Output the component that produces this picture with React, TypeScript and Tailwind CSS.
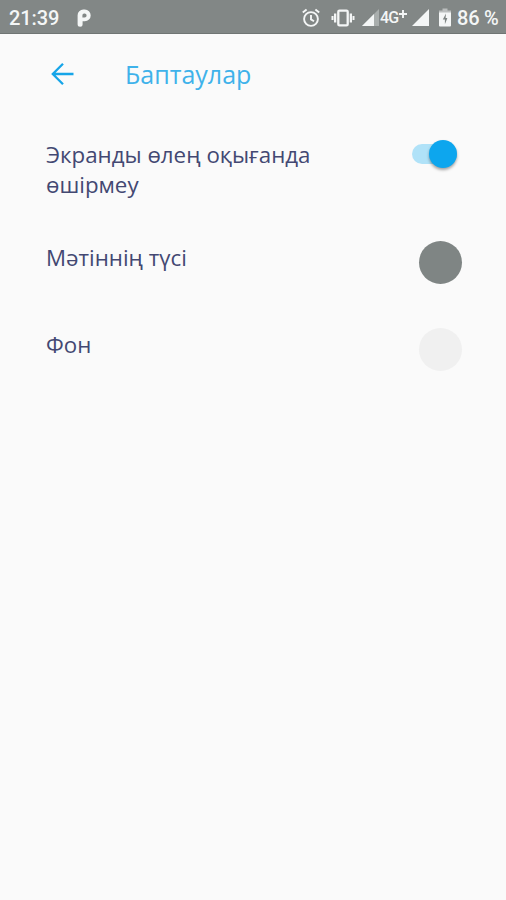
import type { ReactNode } from 'react';

function AlarmIcon() {
  return (
    <svg width="18" height="20" viewBox="0 0 18 20" fill="none" stroke="#f4f6f6" strokeWidth="1.9" className="shrink-0">
      <circle cx="9" cy="11" r="6.9" />
      <path d="M9 7v4.4l3 1.8M0.8 4.6l3.8-3.2M17.2 4.6l-3.8-3.2" />
    </svg>
  );
}

function VibrateIcon() {
  return (
    <svg width="24" height="18" viewBox="0 0 24 18" className="shrink-0">
      <rect x="7.3" y="1.6" width="9.4" height="14.8" rx="1.2" fill="none" stroke="#f4f6f6" strokeWidth="2.3" />
      <path d="M3 4.5h2.3v9H3zM0.5 7h2v4h-2zM18.7 4.5h2.3v9h-2.3zM21.5 7h2v4h-2z" fill="#f4f6f6" />
    </svg>
  );
}

function SignalIcon({ partial }: { partial?: boolean }) {
  return (
    <svg width="17" height="17" viewBox="0 0 17 17" className="shrink-0">
      <path d="M0 17L17 0v17z" fill="#f4f6f6" opacity={partial ? 0.35 : 1} />
      {partial && <path d="M0 17L12 5v12z" fill="#f4f6f6" />}
    </svg>
  );
}

function BatteryIcon() {
  return (
    <svg width="12" height="19" viewBox="0 0 12 19" className="shrink-0">
      <path d="M3.5 0.5h5v2H12v3H0v-3h3.5z" fill="#f4f6f6" opacity="0.5" />
      <path d="M0 4.5h12v13q0 1-1 1H1q-1 0-1-1z" fill="#f4f6f6" />
      <path d="M7 5.5L3.8 11.4h2.1v4.8L8.4 10H6.6z" fill="#7e8483" />
    </svg>
  );
}

function StatusBar() {
  return (
    <div className="flex h-[34px] items-center border-b border-[#707574] bg-[#828786] pt-0.5 pl-[9px] font-['Roboto',sans-serif] text-[20px] font-medium text-[#f4f6f6]">
      <span className="w-[68px] tracking-[-0.1px]">21:39</span>
      <svg width="14" height="18" viewBox="0 0 14 18" className="shrink-0">
        <path fillRule="evenodd" d="M0.6 6.2A5.7 5.7 0 0 1 6.3 0.5H7.8a5.9 5.9 0 0 1 0 11.8H5.6V15.2A2.5 2.5 0 0 1 0.6 15.2zM5.4 6.4v2h2.2a2 2 0 0 0 0-4H7.2A1.9 1.9 0 0 0 5.4 6.4z" fill="#f4f6f6" />
      </svg>
      <div className="ml-[211px] flex items-center">
        <AlarmIcon />
        <div className="ml-[11px]"><VibrateIcon /></div>
        <div className="ml-[7px]"><SignalIcon partial /></div>
        <div className="ml-px flex w-[32px] items-center text-[16px] font-medium tracking-[-0.9px] whitespace-nowrap">
          4G
          <svg width="8" height="8" viewBox="0 0 8 8" className="mb-[7px] ml-px shrink-0">
            <path d="M4 0v8M0 4h8" stroke="#f4f6f6" strokeWidth="1.9" />
          </svg>
        </div>
        <SignalIcon />
        <div className="ml-[10px]"><BatteryIcon /></div>
        <span className="ml-[6px] tracking-[-0.2px] whitespace-nowrap">86 %</span>
      </div>
    </div>
  );
}

function SettingRow({ label, className, children }: { label: string; className: string; children: ReactNode }) {
  return (
    <div className={`flex items-start justify-between pl-[46px] ${className}`}>
      <span className="w-[300px] pt-px text-[22.3px] leading-[30px] text-[#434872]">{label}</span>
      {children}
    </div>
  );
}

export default function App() {
  return (
    <div className="min-h-[900px] w-full bg-[#fafafa] font-['Open_Sans','Noto_Sans',sans-serif]">
      <StatusBar />
      <header className="flex h-20 items-center pl-[51px] text-[#3fb2ea]">
        <svg width="23" height="24" viewBox="0 0 23 24" fill="none" stroke="#16a5e8" strokeWidth="2.3">
          <path d="M22.5 12H2M12 1.8L1.8 12L12 22.2" />
        </svg>
        <h1 className="ml-[51px] pt-0.5 text-[25px]">Баптаулар</h1>
      </header>
      <main>
        <SettingRow label="Экранды өлең оқығанда өшірмеу" className="mt-[25px] pr-[49px]">
          <div className="mt-[5px] flex h-5 w-[45px] items-center justify-end rounded-full bg-[#b0e2f8]">
            <div className="size-7 shrink-0 rounded-full bg-[#0da6ee] shadow-[0_2px_3px_rgba(0,0,0,0.35)]" />
          </div>
        </SettingRow>
        <SettingRow label="Мәтіннің түсі" className="mt-[42px] pr-[44px]">
          <div className="-mt-px size-[43px] rounded-full bg-[#7f8584]" />
        </SettingRow>
        <SettingRow label="Фон" className="mt-[45px] pr-[44px]">
          <div className="-mt-px size-[43px] rounded-full bg-[#f0f0f0]" />
        </SettingRow>
      </main>
    </div>
  );
}
